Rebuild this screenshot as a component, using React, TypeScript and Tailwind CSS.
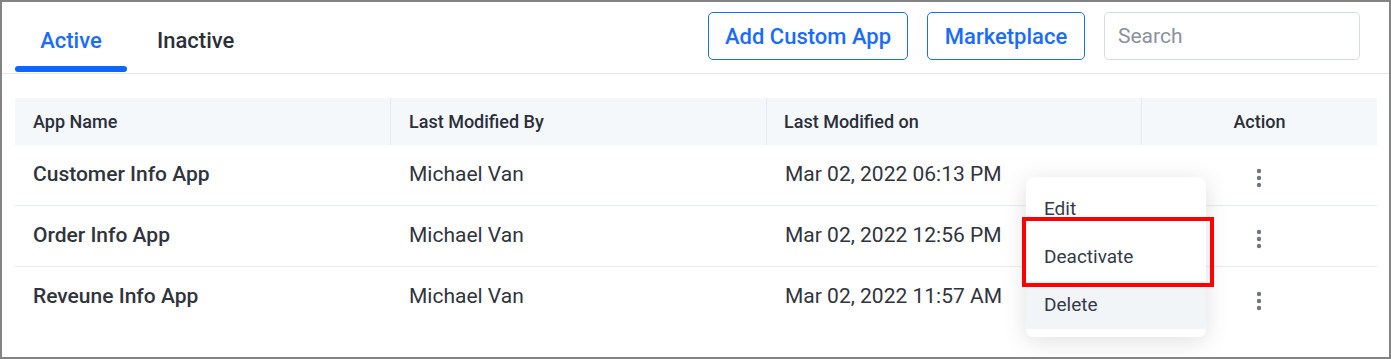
import React from 'react';

const rows = [
  { name: 'Customer Info App', by: 'Michael Van', on: 'Mar 02, 2022 06:13 PM' },
  { name: 'Order Info App', by: 'Michael Van', on: 'Mar 02, 2022 12:56 PM' },
  { name: 'Reveune Info App', by: 'Michael Van', on: 'Mar 02, 2022 11:57 AM' },
];

function Kebab() {
  return (
    <svg width="6" height="20" viewBox="0 0 6 20" className="block">
      <circle cx="3" cy="3" r="2.2" fill="#70757e" />
      <circle cx="3" cy="10" r="2.2" fill="#70757e" />
      <circle cx="3" cy="17" r="2.2" fill="#70757e" />
    </svg>
  );
}

export default function App() {
  return (
    <div className="relative w-[1391px] h-[359px] overflow-hidden border-2 border-[#838383] bg-white font-['Roboto',sans-serif] text-[#2f333d]">
      {/* Header */}
      <div className="flex h-[72px] border-b border-[#e3e8ef] pl-[13px] pr-[29px]">
        <div className="flex">
          <div className="flex w-[112px] flex-col items-center pt-[26px] text-[22px] leading-[26px] font-medium text-[#1a6bff]">
            <span>Active</span>
            <div className="mt-[12px] h-[6px] w-[112px] rounded-full bg-[#0d66ff]" />
          </div>
          <div className="pl-[30px] pt-[26px] text-[22px] leading-[26px] font-medium text-[#2b2f38]">
            Inactive
          </div>
        </div>
        <div className="ml-auto flex items-start gap-[19px] pt-[10px]">
          <button className="flex h-[48px] w-[200px] items-center justify-center rounded-[5px] border border-[#1a6bff] text-[22px] font-medium text-[#1a6bff]">
            Add Custom App
          </button>
          <button className="flex h-[48px] w-[158px] items-center justify-center rounded-[5px] border border-[#1a6bff] text-[22px] font-medium text-[#1a6bff]">
            Marketplace
          </button>
          <input
            placeholder="Search"
            className="h-[48px] w-[256px] rounded-[5px] border border-[#d6dce4] px-[13px] text-[21px] outline-none placeholder:text-[#8a929e]"
          />
        </div>
      </div>

      {/* Table */}
      <div className="ml-[13px] mt-[24px] w-[1362px]">
        <div className="grid h-[47px] grid-cols-[375px_376px_375px_236px] bg-[#f4f8fb] text-[18px] font-medium text-[#2b2f3a]">
          <div className="flex items-center px-[18px]">App Name</div>
          <div className="flex items-center border-l border-[#e4e9ef] px-[18px]">Last Modified By</div>
          <div className="flex items-center border-l border-[#e4e9ef] px-[17px]">Last Modified on</div>
          <div className="flex items-center justify-center border-l border-[#e4e9ef]">Action</div>
        </div>
        {rows.map((r, i) => (
          <div
            key={r.name}
            className={`grid h-[61px] grid-cols-[375px_376px_375px_236px] text-[21px] text-[#30343d] ${i < 2 ? 'border-b border-[#e8edf3]' : ''}`}
          >
            <div className="flex items-center px-[18px] pb-[1px] font-medium">{r.name}</div>
            <div className="flex items-center px-[19px] pb-[1px]">{r.by}</div>
            <div className="flex items-center px-[19px] pb-[1px]">{r.on}</div>
            <div className="flex items-center justify-center pt-[6px]">
              <Kebab />
            </div>
          </div>
        ))}
      </div>

      {/* Dropdown menu */}
      <div className="absolute left-[1024px] top-[175px] w-[180px] rounded-[7px] bg-white pt-[8px] pb-[8px] text-[19px] text-[#343a48] shadow-[0_4px_24px_rgba(0,0,0,0.13)]">
        <div className="flex h-[48px] items-center px-[18px]">Edit</div>
        <div className="flex h-[48px] items-center px-[18px]">Deactivate</div>
        <div className="flex h-[48px] items-center bg-[#f2f5f8] px-[18px]">Delete</div>
      </div>

      {/* Highlight */}
      <div className="absolute left-[1020px] top-[215px] h-[70px] w-[192px] border-4 border-[#ff0000]" />
    </div>
  );
}
